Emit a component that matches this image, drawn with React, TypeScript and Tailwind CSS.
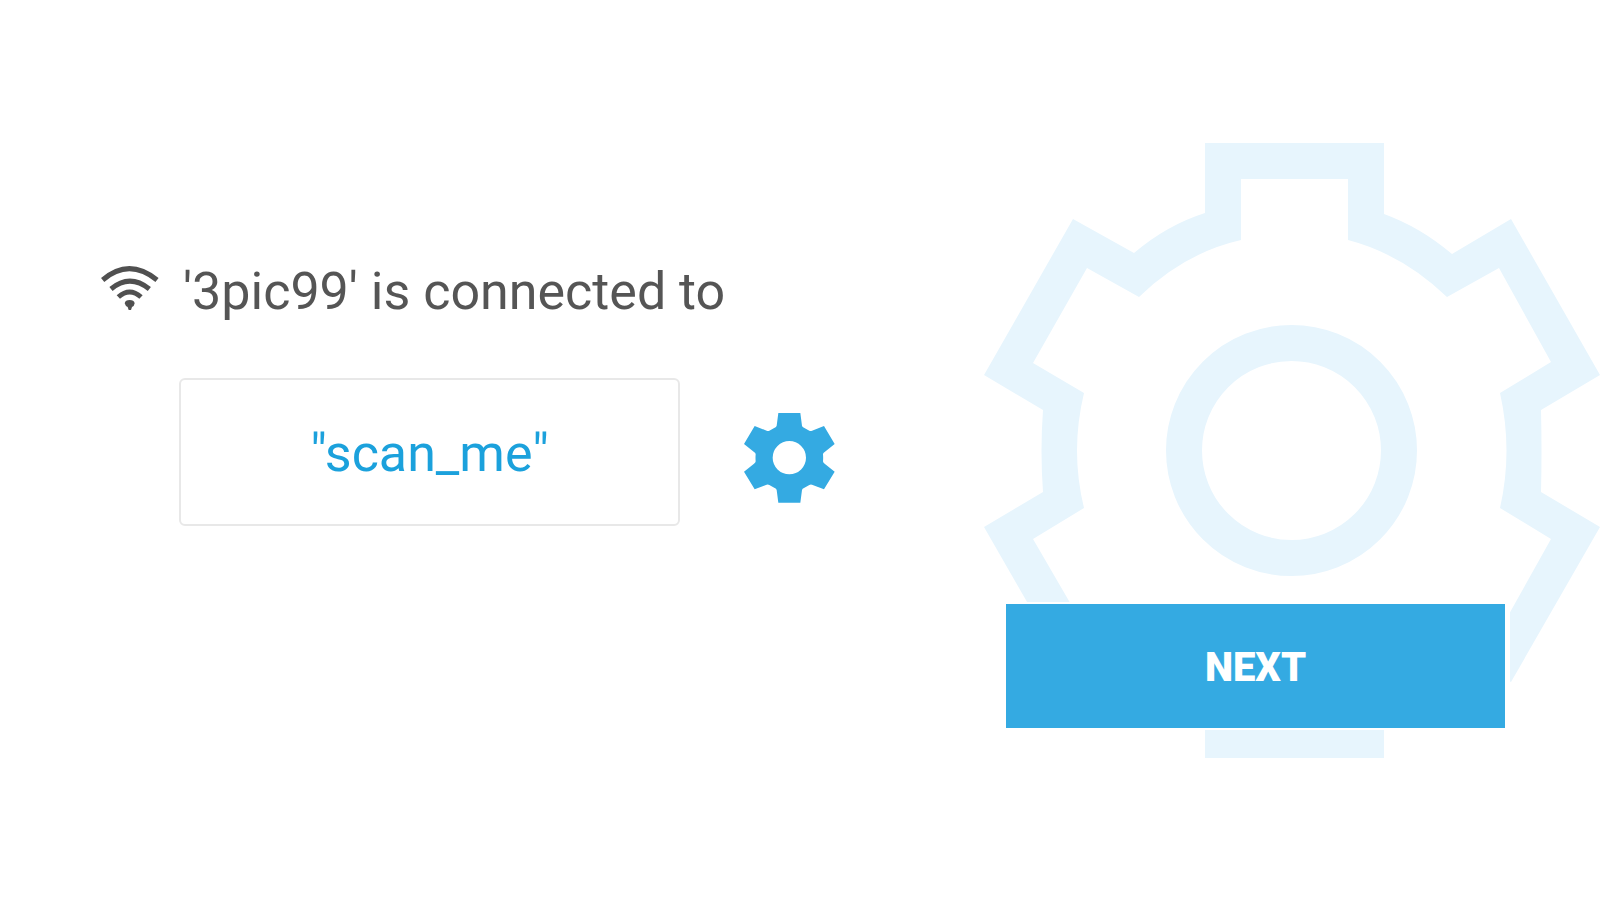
function WifiIcon() {
  return (
    <svg viewBox="0 0 174 132" className="w-[58px] h-[44px]" fill="none" stroke="#505050" strokeWidth="15" aria-hidden="true">
      <path d="M5 42Q84 -26 168 42" />
      <path d="M30 69Q86 22 145 69" />
      <path d="M52 93Q86 63 120 93" />
      <path d="M71 112Q73 102 86 102Q99 102 101 112Q100 120 93 123L90 132H83L80 123Q73 120 71 112Z" fill="#505050" stroke="none" />
    </svg>
  )
}

function GearIcon() {
  return (
    <svg viewBox="0 0 273 270" className="w-[91px] h-[90px]" fill="#34aae2" aria-hidden="true">
      <path
        fillRule="evenodd"
        d="M103 0H169L174 38Q175 42 180 44L196 53Q200 55 204 53L240 39L272 93L242 117Q237 120 237 124Q238 134 237 145Q237 149 242 152L272 176L240 229L204 215Q200 213 196 216L180 225Q175 227 174 231L169 269H103L98 231Q97 227 92 225L76 216Q72 213 68 215L32 229L0 176L30 152Q35 149 35 145Q34 134 35 124Q35 120 30 117L0 93L32 39L68 53Q72 55 76 53L92 44Q97 42 98 38ZM136 84A50 50 0 1 0 136 184A50 50 0 1 0 136 84Z"
      />
    </svg>
  )
}

function GearOutline() {
  return (
    <svg viewBox="984 143 616 615" className="w-[616px] h-[615px]" fill="#e7f5fd" aria-hidden="true">
      <path
        fillRule="evenodd"
        d="M1205 143H1384V214Q1420 227 1452 254L1511 219L1600 375L1541 410Q1542 451 1541 492L1600 527L1511 682L1452 647Q1420 674 1384 687V758H1205V687Q1167 674 1134 647L1073 682L984 527L1043 492Q1040 451 1043 410L984 375L1073 219L1134 253Q1167 225 1205 213Z
           M1241 179V240Q1184 253 1139 297L1087 268L1033 363L1084 393Q1070 451 1084 508L1033 539L1087 632L1139 603Q1184 647 1241 661V722H1348V661Q1402 647 1447 603L1499 632L1551 539L1500 508Q1513 451 1500 393L1551 362L1499 268L1447 297Q1402 254 1348 240V179Z"
      />
      <circle cx="1291.5" cy="450.5" r="107.5" fill="none" stroke="#e7f5fd" strokeWidth="36" />
    </svg>
  )
}

export default function App() {
  return (
    <main className="min-h-screen flex items-center justify-between bg-white pl-[101px] font-['Roboto',sans-serif] text-[52px] leading-[60px]">
      {/* Connection status */}
      <section className="grid grid-cols-[58px_auto] gap-x-5 gap-y-14 items-center pb-28">
        <div className="pb-2">
          <WifiIcon />
        </div>
        <h1 className="pl-1 text-[#555555]">'3pic99' is connected to</h1>

        <div className="col-start-2 flex items-center gap-16">
          <button className="w-[501px] h-[148px] pt-1 border-2 border-[#e8e8e8] rounded-md text-[#1ba1dc]">
            "scan_me"
          </button>
          <button aria-label="Settings" className="pt-3">
            <GearIcon />
          </button>
        </div>
      </section>

      {/* Next step over the gear */}
      <section className="grid shrink-0">
        <div className="col-start-1 row-start-1">
          <GearOutline />
        </div>
        <button className="col-start-1 row-start-1 self-end ml-[22px] mb-[30px] w-[499px] h-[124px] pt-1 bg-[#34aae2] text-white text-[40px] font-black shadow-[3px_0_0_2px_#ffffff]">
          NEXT
        </button>
      </section>
    </main>
  )
}
